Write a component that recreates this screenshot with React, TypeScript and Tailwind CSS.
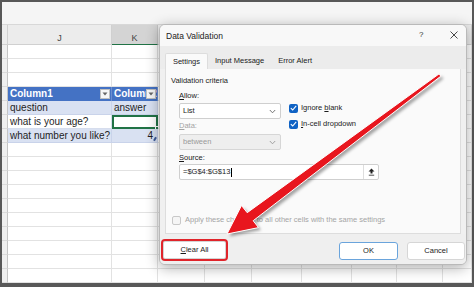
import React from "react";

const COLS = [6, 104, 46, 47, 47, 50, 50, 45, 46, 29];

function Cell({ w, children, cls }: { w: number; children?: React.ReactNode; cls: string }) {
  return (
    <div className={cls} style={{ width: w }}>
      {children}
    </div>
  );
}

function DropBtn() {
  return (
    <div className="absolute right-[1px] top-[2px] w-[10px] h-[10px] bg-[#f7f7f7] border border-[#bfbfbf] flex items-center justify-center">
      <svg width="6" height="4" viewBox="0 0 6 4">
        <path d="M0.5 0.5 L5.5 0.5 L3 3.5 Z" fill="#666" />
      </svg>
    </div>
  );
}

function SheetRow({ r }: { r: number }) {
  const base = "h-[14px] shrink-0 border-r border-b border-[#e2e2e2] relative overflow-hidden";
  const cells: React.ReactNode[] = [];
  COLS.forEach((w, c) => {
    if (c === 0) {
      cells.push(<Cell key={c} w={w} cls="h-[14px] shrink-0 bg-[#efefef] border-r border-b border-r-[#c4c4c4] border-b-[#dadada]" />);
      return;
    }
    if (r === 3 && (c === 1 || c === 2)) {
      cells.push(
        <Cell key={c} w={w} cls="h-[14px] shrink-0 bg-[#4472c4] border-r border-[#6b8fd0] relative overflow-hidden">
          <span className="absolute left-[2px] top-[0px] text-white font-bold text-[10px] leading-[14px] whitespace-nowrap">Column{c === 1 ? "1" : "2"}</span>
          <DropBtn />
        </Cell>
      );
      return;
    }
    if (r === 4 && (c === 1 || c === 2)) {
      cells.push(
        <Cell key={c} w={w} cls="h-[14px] shrink-0 bg-[#d9e1f2] border-r border-b border-[#c9d3ea] relative overflow-hidden">
          <span className="absolute left-[2px] top-0 text-[#1e1e1e] text-[10px] leading-[14px] whitespace-nowrap">{c === 1 ? "question" : "answer"}</span>
        </Cell>
      );
      return;
    }
    if (r === 5 && c === 1) {
      cells.push(
        <Cell key={c} w={w} cls="h-[14px] shrink-0 bg-white border-r border-b border-[#d6dded] relative overflow-hidden">
          <span className="absolute left-[2px] top-0 text-[#1e1e1e] text-[10px] leading-[14px] whitespace-nowrap">what is your age?</span>
        </Cell>
      );
      return;
    }
    if (r === 5 && c === 2) {
      cells.push(
        <Cell key={c} w={w} cls="h-[14px] shrink-0 bg-white border-2 border-[#217346] relative">
          <div className="absolute right-[-3px] bottom-[-3px] w-[4px] h-[4px] bg-[#217346] border border-white" />
        </Cell>
      );
      return;
    }
    if (r === 6 && (c === 1 || c === 2)) {
      cells.push(
        <Cell key={c} w={w} cls="h-[14px] shrink-0 bg-[#d9e1f2] border-r border-b border-[#c9d3ea] relative overflow-hidden">
          {c === 1 ? (
            <span className="absolute left-[2px] top-0 text-[#1e1e1e] text-[10px] leading-[14px] whitespace-nowrap">what number you like?</span>
          ) : (
            <>
              <span className="absolute right-[4px] top-0 text-[#1e1e1e] text-[10px] leading-[14px]">4</span>
              <div className="absolute right-[1px] bottom-[1px] w-[2px] h-[4px] bg-[#3a5a9a] rotate-[30deg]" />
            </>
          )}
        </Cell>
      );
      return;
    }
    cells.push(<Cell key={c} w={w} cls={base + " bg-white"} />);
  });
  return <div className="flex">{cells}</div>;
}

function Check({ checked, disabled }: { checked?: boolean; disabled?: boolean }) {
  if (checked) {
    return (
      <div className="w-[9px] h-[9px] rounded-[2px] bg-[#0f62c4] flex items-center justify-center shrink-0">
        <svg width="7" height="6" viewBox="0 0 7 6">
          <path d="M0.8 3.2 L2.7 5 L6.2 0.9" stroke="white" strokeWidth="1.1" fill="none" />
        </svg>
      </div>
    );
  }
  return (
    <div className={"w-[9px] h-[9px] rounded-[2px] border shrink-0 " + (disabled ? "border-[#c8c8c8] bg-[#f5f5f5]" : "border-[#888] bg-white")} />
  );
}

function Chevron({ color }: { color: string }) {
  return (
    <svg width="7" height="5" viewBox="0 0 7 5">
      <path d="M0.8 1 L3.5 3.8 L6.2 1" stroke={color} strokeWidth="0.9" fill="none" />
    </svg>
  );
}

function Dialog() {
  return (
    <div className="absolute left-[159px] top-[24px] w-[308px] h-[241px] rounded-[6px] border border-[#b9b9b9] bg-[#f0f0f0] shadow-[0_3px_14px_rgba(0,0,0,0.32)] overflow-hidden flex flex-col text-[#1b1b1b]">
      {/* title */}
      <div className="h-[21px] shrink-0 bg-[#f8f8f8] flex items-center relative">
        <span className="pl-[6px] text-[8.5px] leading-[10px]">Data Validation</span>
        <span className="absolute left-[259px] top-[5px] text-[8px] leading-[10px] text-[#333]">?</span>
        <svg className="absolute left-[290px] top-[6px]" width="8" height="8" viewBox="0 0 8 8">
          <path d="M0.5 0.5 L7.5 7.5 M7.5 0.5 L0.5 7.5" stroke="#333" strokeWidth="0.9" />
        </svg>
      </div>
      {/* tabs */}
      <div className="h-[23px] shrink-0 bg-[#ececec] flex items-end pl-[5px]">
        <div className="w-[43px] h-[16px] bg-[#fafafa] border border-b-0 border-[#dddddd] rounded-t-[2px] flex items-center justify-center text-[7.5px] leading-[10px]">Settings</div>
        <div className="h-[16px] px-[7px] flex items-center text-[7.5px] leading-[10px]">Input Message</div>
        <div className="h-[16px] px-[7px] flex items-center text-[7.5px] leading-[10px]">Error Alert</div>
      </div>
      {/* panel */}
      <div className="h-[165px] shrink-0 ml-[5px] mr-[5px] bg-[#fafafa] border border-t-0 border-[#dddddd] flex flex-col pl-[5px]">
        <div className="mt-[7px] text-[7.5px] leading-[10px]">Validation criteria</div>
        <div className="flex pl-[8px] mt-[5px]">
          <div className="w-[102px] flex flex-col">
            <div className="text-[7.5px] leading-[10px]"><span className="underline">A</span>llow:</div>
            <div className="mt-[2px] h-[16px] bg-white border border-[#cfcfcf] rounded-[2px] flex items-center justify-between pl-[3px] pr-[4px] text-[7.5px]">
              <span>List</span>
              <Chevron color="#666" />
            </div>
            <div className="mt-[2px] text-[7.5px] leading-[10px] text-[#a3a3a3]"><span className="underline">D</span>ata:</div>
            <div className="mt-[3px] h-[16px] bg-[#eeeeee] border border-[#d6d6d6] rounded-[2px] flex items-center justify-between pl-[3px] pr-[4px] text-[7.5px] text-[#9a9a9a]">
              <span>between</span>
              <Chevron color="#999" />
            </div>
          </div>
          <div className="ml-[8px] flex flex-col pt-[12px] gap-[6px]">
            <div className="flex items-center gap-[3px] text-[7.5px] leading-[10px]">
              <Check checked />
              <span>Ignore <span className="underline">b</span>lank</span>
            </div>
            <div className="flex items-center gap-[3px] text-[7.5px] leading-[10px]">
              <Check checked />
              <span><span className="underline">I</span>n-cell dropdown</span>
            </div>
          </div>
        </div>
        <div className="pl-[8px] mt-[3px] text-[7.5px] leading-[10px]"><span className="underline">S</span>ource:</div>
        <div className="ml-[8px] mt-[1px] w-[200px] h-[16px] bg-white border border-[#cfcfcf] rounded-[2px] flex items-center text-[7.5px]">
          <span className="pl-[3px] flex-1">=$G$4:$G$13<span className="inline-block w-[0.5px] h-[9px] bg-black align-middle ml-[0.5px]" /></span>
          <div className="w-[15px] h-full border-l border-[#dedede] flex items-center justify-center">
            <svg width="7" height="8" viewBox="0 0 7 8">
              <path d="M3.5 0.5 L6.5 3.6 L4.5 3.6 L4.5 5.6 L2.5 5.6 L2.5 3.6 L0.5 3.6 Z" fill="#222" />
              <path d="M0.8 7.2 L6.2 7.2" stroke="#222" strokeWidth="0.8" />
            </svg>
          </div>
        </div>
        <div className="mt-auto mb-[8px] flex items-center gap-[4px] pl-[1px] text-[7.5px] leading-[10px] text-[#a5a5a5]">
          <Check disabled />
          <span>Apply these changes to all other cells with the same settings</span>
        </div>
      </div>
      {/* footer */}
      <div className="flex-1 bg-[#efefef] relative">
        <div className="absolute left-[3px] top-[7px] w-[63px] h-[18px] bg-white border border-[#d4d4d4] rounded-[2px] outline-2 outline-[#e0242b] flex items-center justify-center text-[7.5px]">
          <span><span className="underline">C</span>lear All</span>
        </div>
        <div className="absolute left-[179px] top-[8px] w-[59px] h-[18px] bg-white border border-[#6aa4dc] rounded-[3px] flex items-center justify-center text-[7.5px]">OK</div>
        <div className="absolute left-[247px] top-[8px] w-[58px] h-[18px] bg-white border border-[#d6d6d6] rounded-[3px] flex items-center justify-center text-[7.5px]">Cancel</div>
      </div>
    </div>
  );
}

function Arrow() {
  const pts = "227,234 258.5,227.6 253.2,220.7 440.8,76.2 439.2,73.8 247.2,212.7 241.5,205.5";
  return (
    <svg className="absolute left-0 top-0 pointer-events-none" width="474" height="287" viewBox="0 0 474 287">
      <defs>
        <filter id="sh" x="-20%" y="-20%" width="140%" height="140%">
          <feGaussianBlur stdDeviation="1.5" />
        </filter>
      </defs>
      <polygon points={pts} transform="translate(2.5,2.5)" fill="rgba(0,0,0,0.35)" filter="url(#sh)" />
      <polygon points={pts} fill="#e8161e" stroke="#ffffff" strokeWidth="1" strokeLinejoin="round" />
    </svg>
  );
}

export default function App() {
  const rows = Array.from({ length: 17 }, (_, i) => i);
  return (
    <div className="relative w-[474px] h-[287px] bg-[#585858] pt-[2px] pl-[2px] pr-[2px] pb-[4px] overflow-hidden" style={{ fontFamily: '"Liberation Sans", Arial, sans-serif' }}>
      <div className="w-[470px] h-[281px] bg-white flex flex-col overflow-hidden">
        <div className="h-[22px] shrink-0 bg-[#f5f5f5]" />
        <div className="h-[21px] shrink-0 flex border-t border-[#d8d8d8]">
          {COLS.map((w, c) => (
            <div
              key={c}
              style={{ width: w }}
              className={
                "shrink-0 h-[20px] flex items-end justify-center pb-[1px] text-[9px] leading-[10px] text-[#444] border-r border-b " +
                (c === 2 ? "bg-[#d4d4d4] border-r-[#c4c4c4] border-b-[#217346]" : "bg-[#ececec] border-[#d0d0d0]")
              }
            >
              {c === 1 ? "J" : c === 2 ? "K" : ""}
            </div>
          ))}
        </div>
        {rows.map((r) => (
          <SheetRow key={r} r={r} />
        ))}
      </div>
      <Dialog />
      <Arrow />
    </div>
  );
}
